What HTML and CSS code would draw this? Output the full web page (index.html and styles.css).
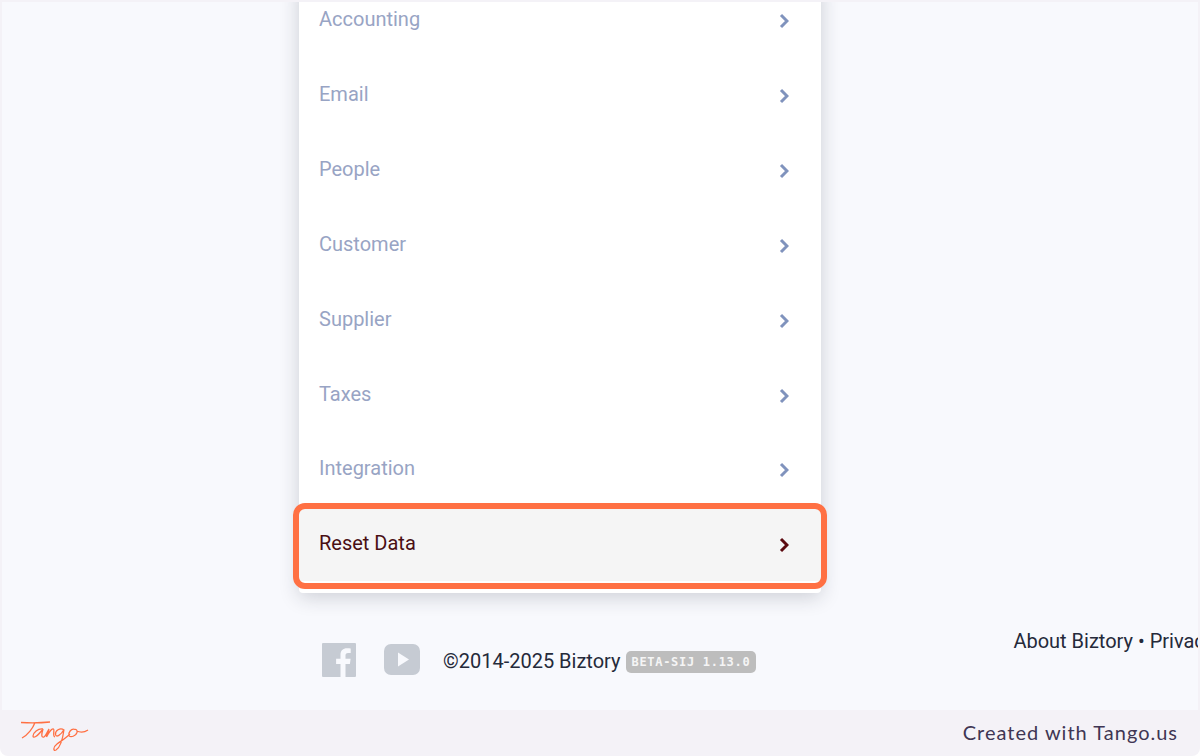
FILE: index.html
```html
<!DOCTYPE html>
<html lang="en">
<head>
    <meta charset="UTF-8">
    <title>Biztory settings</title>
    <link rel="stylesheet" href="styles.css">
</head>
<body>
    <div class="frame">
        <div class="shot">
            <div class="menu-card">
                <a class="menu-row">Accounting<svg class="chev" viewBox="0 0 10 16"><path d="M2 2l6 6-6 6"/></svg></a>
                <a class="menu-row">Email<svg class="chev" viewBox="0 0 10 16"><path d="M2 2l6 6-6 6"/></svg></a>
                <a class="menu-row">People<svg class="chev" viewBox="0 0 10 16"><path d="M2 2l6 6-6 6"/></svg></a>
                <a class="menu-row">Customer<svg class="chev" viewBox="0 0 10 16"><path d="M2 2l6 6-6 6"/></svg></a>
                <a class="menu-row">Supplier<svg class="chev" viewBox="0 0 10 16"><path d="M2 2l6 6-6 6"/></svg></a>
                <a class="menu-row">Taxes<svg class="chev" viewBox="0 0 10 16"><path d="M2 2l6 6-6 6"/></svg></a>
                <a class="menu-row">Integration<svg class="chev" viewBox="0 0 10 16"><path d="M2 2l6 6-6 6"/></svg></a>
                <a class="menu-row active">Reset Data<svg class="chev" viewBox="0 0 10 16"><path d="M2 2l6 6-6 6"/></svg>
                    <span class="highlight"></span>
                </a>
            </div>
            <div class="site-footer">
                <div class="socials">
                    <svg class="fb" viewBox="0 0 34 34"><path d="M1 0h32a1 1 0 0 1 1 1v32a1 1 0 0 1-1 1h-9.500V21h4.400l.7-5.200h-5.100v-3.200c0-1.500.5-2.500 2.600-2.500h2.600V5.500c-.5-.1-2-.2-3.800-.2-3.800 0-6.400 2.300-6.400 6.600v3.900h-4.400V21h4.400v13H1a1 1 0 0 1-1-1V1a1 1 0 0 1 1-1z"/></svg>
                    <svg class="yt" viewBox="0 0 36 31"><path d="M7 0h22a7 7 0 0 1 7 7v17a7 7 0 0 1-7 7H7a7 7 0 0 1-7-7V7a7 7 0 0 1 7-7zm7 8.500v14l11-7z" fill-rule="evenodd"/></svg>
                </div>
                <div class="copy">©2014-2025 Biztory <span class="version">BETA-SIJ 1.13.0</span></div>
                <div class="links">About Biztory • Privacy Policy • Terms of Service</div>
            </div>
        </div>
        <div class="tango-bar">
            <svg class="tango-logo" viewBox="0 0 70 36"><path d="M1 5.500C10 6 20 6 30 5M15 5.500C13 11 8 18 2 21M23 12C18 11 13 16 13 19c0 2.500 4 1 10-7-1.500 5-2 9 1 8 2-1 3-5 5-8-1 3-2 6-2.500 8 2.500-5 5.500-9 7-8 1.500 1-1.500 7 1.500 8M44 13c-4-3-9 1-8.500 4.500.5 3.500 5.500.5 8.500-5-1 7.500-3 17.500-8 20.500-3 1.500-3-3 1-6 4-3 9-6 13-10M55 12.500c-4-1.500-7 3.500-6 6 1.500 2.500 7 .5 8-3 .5-2.500-1-3.500-2.500-3M56.500 14c3.500 1.500 8.500 1 11.500-1"/></svg>
            <span class="tango-credit">Created with Tango.us</span>
        </div>
    </div>
</body>
</html>
```
FILE: styles.css
```css
* {
    box-sizing: border-box;
}

body {
    margin: 0;
    background-color: #fff;
    font-family: Roboto, sans-serif;
}

.frame {
    display: flex;
    flex-direction: column;
    width: 1200px;
    height: 756px;
    background-color: #f4f2f7;
    border-radius: 0 0 8px 8px;
    overflow: hidden;
}

.shot {
    flex: 1;
    margin: 2px 2px 0;
    background-color: #f8f9fd;
    overflow: hidden;
}

.menu-card {
    width: 522px;
    margin: -20px 0 0 297px;
    padding-bottom: 12px;
    background-color: #fff;
    box-shadow: 0 4px 20px rgba(30, 35, 50, 0.2);
    border-radius: 4px;
}

.menu-row {
    position: relative;
    display: flex;
    justify-content: space-between;
    align-items: center;
    height: 74.85px;
    padding: 0 32px 0 20px;
    font-size: 20px;
    color: #98a4c4;
}

.chev {
    width: 10px;
    height: 16px;
    margin-top: 4px;
    fill: none;
    stroke: #8093bd;
    stroke-width: 3;
}

.menu-row.active {
    background-color: #f5f5f5;
    color: #4a0f14;
}

.menu-row.active .chev {
    stroke: #5c0a10;
}

.highlight {
    position: absolute;
    top: -3px;
    left: -6px;
    right: -6px;
    bottom: -8px;
    border: 6px solid #ff7043;
    border-radius: 12px;
}

.site-footer {
    display: flex;
    align-items: flex-start;
    width: 1400px;
    margin: 37px 0 0 320px;
    color: #252a3a;
    font-size: 20px;
}

.socials {
    display: flex;
    align-items: center;
    gap: 28px;
    margin-top: 13px;
}

.fb {
    width: 34px;
    height: 34px;
    fill: #c6cbd3;
}

.yt {
    width: 36px;
    height: 31px;
    fill: #c6cbd3;
}

.copy {
    margin: 19px 0 0 23px;
    white-space: nowrap;
}

.version {
    display: inline-block;
    vertical-align: 2px;
    padding: 4px 6px;
    background-color: #bdbdbd;
    color: #f5f5f5;
    font-family: "DejaVu Sans Mono", monospace;
    font-size: 12px;
    font-weight: 700;
    letter-spacing: 0.7px;
    border-radius: 5px;
}

.links {
    margin: -1px 0 0 257px;
    white-space: nowrap;
}

.tango-bar {
    display: flex;
    justify-content: space-between;
    align-items: center;
    height: 46px;
    padding: 0 22px 0 20px;
}

.tango-logo {
    width: 70px;
    height: 36px;
    margin-top: 4px;
    fill: none;
    stroke: #ff7043;
    stroke-width: 1.3;
}

.tango-credit {
    margin-top: -2px;
    font-family: Lato, sans-serif;
    font-size: 20px;
    letter-spacing: 1px;
    color: #3f3654;
}
```
